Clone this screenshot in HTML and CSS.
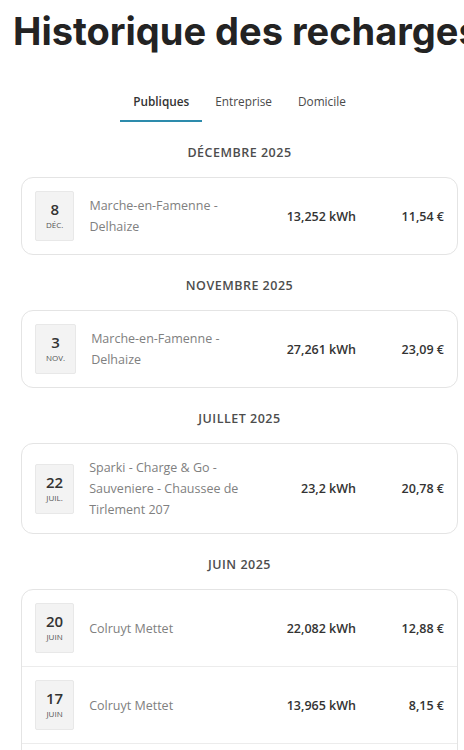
FILE: index.html
```html
<!DOCTYPE html>
<html lang="fr">
<head>
<meta charset="utf-8">
<title>Historique des recharges</title>
<link rel="stylesheet" href="styles.css">
</head>
<body>
<div class="page">
  <h1 class="title">Historique des recharges</h1>
  <nav class="tabs">
    <span class="tab active">Publiques</span>
    <span class="tab">Entreprise</span>
    <span class="tab">Domicile</span>
  </nav>
  <main class="content">
    <section class="month">
      <h2 class="month-title">DÉCEMBRE 2025</h2>
      <div class="card">
        <div class="row">
          <div class="date"><span class="day">8</span><span class="mon">DÉC.</span></div>
          <div class="name">Marche-en-Famenne - Delhaize</div>
          <div class="kwh">13,252 kWh</div>
          <div class="price">11,54 €</div>
        </div>
      </div>
    </section>
    <section class="month">
      <h2 class="month-title">NOVEMBRE 2025</h2>
      <div class="card">
        <div class="row">
          <div class="date"><span class="day">3</span><span class="mon">NOV.</span></div>
          <div class="name">Marche-en-Famenne - Delhaize</div>
          <div class="kwh">27,261 kWh</div>
          <div class="price">23,09 €</div>
        </div>
      </div>
    </section>
    <section class="month">
      <h2 class="month-title">JUILLET 2025</h2>
      <div class="card">
        <div class="row">
          <div class="date"><span class="day">22</span><span class="mon">JUIL.</span></div>
          <div class="name">Sparki - Charge &amp; Go - Sauveniere - Chaussee de Tirlement 207</div>
          <div class="kwh">23,2 kWh</div>
          <div class="price">20,78 €</div>
        </div>
      </div>
    </section>
    <section class="month">
      <h2 class="month-title">JUIN 2025</h2>
      <div class="card">
        <div class="row">
          <div class="date"><span class="day">20</span><span class="mon">JUIN</span></div>
          <div class="name">Colruyt Mettet</div>
          <div class="kwh">22,082 kWh</div>
          <div class="price">12,88 €</div>
        </div>
        <div class="row">
          <div class="date"><span class="day">17</span><span class="mon">JUIN</span></div>
          <div class="name">Colruyt Mettet</div>
          <div class="kwh">13,965 kWh</div>
          <div class="price">8,15 €</div>
        </div>
        <div class="row">
          <div class="date"><span class="day">9</span><span class="mon">JUIN</span></div>
          <div class="name">Colruyt Mettet</div>
          <div class="kwh">18,407 kWh</div>
          <div class="price">10,74 €</div>
        </div>
      </div>
    </section>
  </main>
</div>
</body>
</html>
```

FILE: styles.css
```css
html, body {
  margin: 0;
  padding: 0;
  background: #ffffff;
}

body {
  font-family: "Open Sans", "Noto Sans", "Liberation Sans", sans-serif;
  color: #333333;
  overflow: hidden;
}

.page {
  width: 464px;
}

.title {
  margin: 8px 0 0 0;
  padding-left: 13px;
  font-family: Inter, "Liberation Sans", sans-serif;
  font-size: 38px;
  line-height: 46px;
  font-weight: 700;
  letter-spacing: 0;
  color: #232323;
  white-space: nowrap;
}

.tabs {
  display: flex;
  justify-content: center;
  margin: 27px 6px 0 21px;
}

.tab {
  padding: 12px 13px 11px;
  font-size: 11.8px;
  line-height: 16px;
  color: #4a4a4a;
  border-bottom: 2px solid transparent;
}

.tab.active {
  font-weight: 600;
  color: #333333;
  border-bottom-color: #2d8bac;
}

.content {
  margin: 0 6px 0 21px;
}

.month-title {
  margin: 0;
  padding: 22px 0 15px;
  text-align: center;
  font-size: 12.5px;
  line-height: 18px;
  font-weight: 600;
  letter-spacing: 0.5px;
  color: #4d4d4d;
}

.card {
  border: 1px solid #e4e4e4;
  border-radius: 12px;
  background: #ffffff;
}

.row {
  display: grid;
  grid-template-columns: auto 1fr 96px 88px;
  align-items: center;
  padding: 13px 13px;
  column-gap: 0;
}

.row + .row {
  border-top: 1px solid #ececec;
}

.date {
  display: flex;
  flex-direction: column;
  align-items: center;
  padding: 7px 10px;
  min-height: 34px;
  background: #f3f3f3;
  border: 1px solid #e8e8e8;
  border-radius: 2px;
  margin-right: 15px;
}

.day {
  font-size: 15px;
  line-height: 20px;
  font-weight: 600;
  color: #333333;
}

.mon {
  font-size: 8px;
  line-height: 12px;
  color: #555555;
}

.name {
  font-size: 12.5px;
  line-height: 21px;
  color: #808080;
  padding-right: 8px;
}

.kwh,
.price {
  text-align: right;
  font-size: 12.5px;
  font-weight: 600;
  color: #333333;
  white-space: nowrap;
}
```
